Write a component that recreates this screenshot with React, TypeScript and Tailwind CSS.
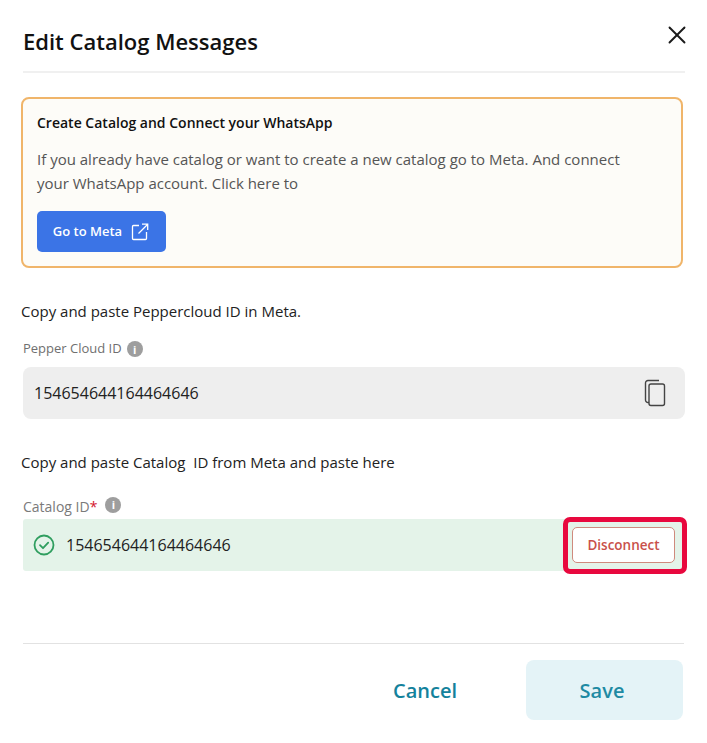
import { X } from "lucide-react";

function Info({ className = "" }: { className?: string }) {
  return (
    <span className={`inline-flex items-center justify-center w-4 h-4 rounded-full bg-[#9e9e9e] text-white text-[11px] font-bold leading-none ${className}`}>
      i
    </span>
  );
}

export default function App() {
  return (
    <div className="w-[707px] h-[743px] bg-white text-[#1c1c1c] overflow-hidden pl-[21px] pr-[22px] flex flex-col" style={{ fontFamily: '"Open Sans", "Noto Sans", sans-serif' }}>
      <header className="ml-[2px] h-[73px] border-b-2 border-[#f0f0f0] flex justify-between relative shrink-0">
        <h1 className="text-[22px] leading-[30px] font-semibold mt-[26px] text-[#111]">Edit Catalog Messages</h1>
        <button className="absolute right-[-7px] top-[20px] text-[#1a1a1a]">
          <X size={30} strokeWidth={1.5} />
        </button>
      </header>

      <section className="mt-[24px] h-[171px] w-[662px] rounded-lg border-2 border-[#f0b56a] bg-[#fdfcf8] pl-[14px] pt-[14px] shrink-0">
        <h2 className="text-sm leading-5 font-semibold text-[#111]">Create Catalog and Connect your WhatsApp</h2>
        <p className="mt-[14px] text-[15px] leading-6 text-[#555] w-[600px]">
          If you already have catalog or want to create a new catalog go to Meta. And connect your WhatsApp account. Click here to
        </p>
        <button className="mt-[16px] w-[129px] h-[41px] rounded-[5px] bg-[#3b74e6] text-white text-[13px] font-semibold flex items-center justify-center gap-[8px]">
          <span>Go to Meta</span>
          <svg width="20" height="20" viewBox="0 0 20 20" fill="none" stroke="currentColor" strokeWidth="1.3">
            <path d="M9 3.5H3.5a1 1 0 0 0-1 1v12a1 1 0 0 0 1 1h12a1 1 0 0 0 1-1V10" />
            <path d="M8.5 11.5 17.5 2.5M12 2.2h5.7v5.7" />
          </svg>
        </button>
      </section>

      <p className="mt-[33px] text-[15px] leading-5 text-[#222]">Copy and paste Peppercloud ID in Meta.</p>

      <div className="mt-[18px] ml-[2px] flex items-center gap-[5px] h-5 text-[13px] text-[#6f6f6f]">
        <span>Pepper Cloud ID</span>
        <Info />
      </div>

      <div className="mt-[8px] ml-[2px] w-[662px] h-[52px] rounded-lg bg-[#eeeeee] flex items-center justify-between pl-[11px] pr-[19px] text-base shrink-0">
        <span className="text-[#222]">154654644164464646</span>
        <svg width="22" height="28" viewBox="0 0 22 28" fill="none" stroke="#444" strokeWidth="1.4">
          <rect x="5" y="5" width="15.5" height="21.5" rx="2" />
          <path d="M5 23.5H4a2.5 2.5 0 0 1-2.5-2.5V4A2.5 2.5 0 0 1 4 1.5h11" />
        </svg>
      </div>

      <p className="mt-[33px] text-[15px] leading-5 text-[#222] whitespace-pre">Copy and paste Catalog  ID from Meta and paste here</p>

      <div className="mt-[24px] ml-[2px] flex items-center gap-[4px] h-5 text-[14px] text-[#7a7a7a]">
        <span>Catalog ID<span className="text-[#d3142c]">*</span></span>
        <Info className="ml-[4px] mb-[3px]" />
      </div>

      <div className="relative mt-[3px] ml-[2px] w-[662px] h-[52px] rounded-[3px] bg-[#e4f3e9] flex items-center justify-between pl-[10px] pr-[10px] shrink-0">
        <div className="flex items-center gap-[11px]">
          <svg width="22" height="22" viewBox="0 0 22 22" fill="none" stroke="#2f9e5f" strokeWidth="1.8">
            <circle cx="11" cy="11" r="9.5" />
            <path d="M7 11.2l3 3 5.2-5.6" strokeLinecap="round" strokeLinejoin="round" />
          </svg>
          <span className="text-base text-[#222]">154654644164464646</span>
        </div>
        <button className="w-[103px] h-[36px] rounded-[5px] border border-[#cf8a7d] bg-white text-[#c9504a] text-[13.5px] font-semibold">
          Disconnect
        </button>
        <div className="absolute left-[540px] top-[-2px] w-[124px] h-[57px] rounded-[7px] border-[5px] border-[#e8083e] pointer-events-none" />
      </div>

      <div className="mt-[72px] ml-[2px] w-[661px] border-t border-[#e2e2e2] shrink-0" />

      <footer className="mt-[16px] pr-[2px] flex justify-end items-center">
        <button className="mr-[69px] pt-[1px] text-xl font-semibold text-[#14829c]">Cancel</button>
        <button className="w-[157px] h-[60px] pr-[5px] pt-[1px] rounded-lg bg-[#e4f3f7] text-xl font-semibold text-[#1e8aa3]">Save</button>
      </footer>
    </div>
  );
}
